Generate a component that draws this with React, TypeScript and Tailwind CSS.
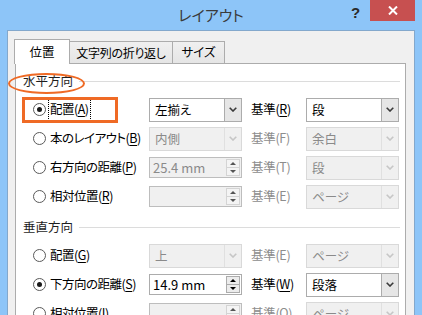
import React from "react";

function Chevron({ color }: { color: string }) {
  return (
    <svg width="8" height="5" viewBox="0 0 8 5">
      <path d="M0.7 0.7 L4 4 L7.3 0.7" fill="none" stroke={color} strokeWidth="1.6" />
    </svg>
  );
}

function Tri({ up, color }: { up?: boolean; color: string }) {
  return (
    <svg width="6" height="3" viewBox="0 0 6 3">
      <path d={up ? "M0 3 L3 0 L6 3 Z" : "M0 0 L3 3 L6 0 Z"} fill={color} />
    </svg>
  );
}

function Combo({ text, enabled }: { text: string; enabled: boolean }) {
  return (
    <div
      className={`flex h-[24px] w-[93px] shrink-0 border ${
        enabled ? "border-[#acacac] bg-white" : "border-[#d9d9d9] bg-[#f0f0f0]"
      }`}
    >
      <div
        className={`flex-1 pl-[5px] text-[12.5px] leading-[22px] ${
          enabled ? "text-black" : "text-[#8a8a8a]"
        }`}
      >
        {text}
      </div>
      <div
        className={`flex w-[17px] items-center justify-center border-l ${
          enabled ? "border-[#acacac] bg-[#e6e6e6]" : "border-[#e0e0e0] bg-[#f0f0f0]"
        }`}
      >
        <Chevron color={enabled ? "#3a3a3a" : "#c6c6c6"} />
      </div>
    </div>
  );
}

function Spin({ text, enabled }: { text: string; enabled: boolean }) {
  return (
    <div
      className={`flex h-[21px] w-[93px] shrink-0 border ${
        enabled ? "border-[#acacac] bg-white" : "border-[#bdbdbd] bg-[#f0f0f0]"
      }`}
    >
      <div
        className={`flex-1 pl-[3px] text-[13px] leading-[19px] ${
          enabled ? "text-black" : "text-[#8a8a8a]"
        }`}
      >
        {text}
      </div>
      <div className="flex w-[16px] flex-col p-[1px]">
        <div
          className={`flex flex-1 items-center justify-center border ${
            enabled ? "border-[#acacac] bg-[#ececec]" : "border-[#d4d4d4] bg-[#f4f4f4]"
          }`}
        >
          <Tri up color={enabled ? "#000" : "#555"} />
        </div>
        <div
          className={`flex flex-1 items-center justify-center border border-t-0 ${
            enabled ? "border-[#acacac] bg-[#ececec]" : "border-[#d4d4d4] bg-[#f4f4f4]"
          }`}
        >
          <Tri color={enabled ? "#000" : "#555"} />
        </div>
      </div>
    </div>
  );
}

function Radio({ checked }: { checked?: boolean }) {
  return (
    <div className="flex h-[13px] w-[13px] shrink-0 items-center justify-center rounded-full border border-[#5a5a5a] bg-white">
      {checked && <div className="h-[5px] w-[5px] rounded-full bg-[#1a1a1a]" />}
    </div>
  );
}

function Label({ pre, key1, focus }: { pre: string; key1: string; focus?: boolean }) {
  return (
    <span
      className={`whitespace-nowrap text-[12.5px] tracking-[-0.5px] text-black ${
        focus ? "outline outline-1 outline-dotted outline-black outline-offset-[1px]" : ""
      }`}
    >
      {pre}(<span className="underline underline-offset-2">{key1}</span>)
    </span>
  );
}

function Kijun({ k, enabled }: { k: string; enabled: boolean }) {
  return (
    <div
      className={`ml-[9px] w-[55px] shrink-0 whitespace-nowrap text-[12.5px] tracking-[-0.3px] ${
        enabled ? "text-black" : "text-[#8d8d8d]"
      }`}
    >
      基準(
      {enabled ? <span className="underline underline-offset-2">{k}</span> : k})
    </div>
  );
}

function Row({
  label,
  k,
  checked,
  focus,
  left,
  kijun,
  kEnabled,
  right,
}: {
  label: string;
  k: string;
  checked?: boolean;
  focus?: boolean;
  left: React.ReactNode;
  kijun: string;
  kEnabled: boolean;
  right: React.ReactNode;
}) {
  return (
    <div className="flex h-[29px] items-center">
      <div className="flex w-[133px] shrink-0 items-center gap-[4px] pl-[17px]">
        <Radio checked={checked} />
        <Label pre={label} key1={k} focus={focus} />
      </div>
      {left}
      <Kijun k={kijun} enabled={kEnabled} />
      {right}
    </div>
  );
}

function Header({ text }: { text: string }) {
  return (
    <div className="flex h-[20px] items-center pl-[7px] pr-[5px]">
      <span className="text-[12.5px] text-[#1e1e1e]">{text}</span>
      <div className="ml-[6px] h-px flex-1 bg-[#dcdcdc]" />
    </div>
  );
}

export default function App() {
  return (
    <div className="relative flex h-[315px] w-[422px] flex-col overflow-hidden bg-[#8dc5f8] font-['Noto_Sans_CJK_JP','Noto_Sans',sans-serif] [font-feature-settings:'palt']">
      {/* title bar */}
      <div className="relative flex h-[30px] shrink-0 items-center justify-center">
        <span className="text-[15px] text-[#3a3a3a]">レイアウト</span>
        <span className="absolute left-[351px] top-[2px] text-[15px] font-bold text-[#2a2a2a] font-['Liberation_Sans',sans-serif]">
          ?
        </span>
        <div className="absolute left-[370px] top-0 flex h-[21px] w-[45px] items-center justify-center bg-[#c75050]">
          <svg width="10" height="9" viewBox="0 0 10 9">
            <path d="M1 0.5 L9 8.5 M9 0.5 L1 8.5" stroke="#fff" strokeWidth="2" />
          </svg>
        </div>
      </div>

      {/* body */}
      <div className="flex flex-1 px-[7px]">
        <div className="flex flex-1 flex-col border border-b-0 border-[#83a8cc] bg-[#f0f0f0] pt-[8px]">
          {/* tabs */}
          <div className="flex items-end pl-[6px]">
            <div className="relative z-10 -mb-px flex h-[25px] w-[56px] items-center justify-center border border-b-0 border-[#acacac] bg-white text-[12.5px] text-black">
              位置
            </div>
            <div className="-ml-px flex h-[22px] w-[104px] items-center justify-center border border-b-0 border-[#acacac] bg-gradient-to-b from-[#f0f0f0] to-[#e5e5e5] text-[12px] tracking-[-0.3px] text-black">
              文字列の折り返し
            </div>
            <div className="-ml-px flex h-[22px] w-[53px] items-center justify-center border border-b-0 border-[#acacac] bg-gradient-to-b from-[#f0f0f0] to-[#e5e5e5] text-[12.5px] text-black">
              サイズ
            </div>
          </div>

          {/* panel */}
          <div className="ml-[7px] flex w-[391px] flex-1 flex-col border border-b-0 border-[#acacac] bg-white pt-[7px]">
            <Header text="水平方向" />
            <div className="mt-[4px]">
              <Row
                label="配置"
                k="A"
                checked
                focus
                left={<Combo text="左揃え" enabled />}
                kijun="R"
                kEnabled
                right={<Combo text="段" enabled />}
              />
              <Row
                label="本のレイアウト"
                k="B"
                left={<Combo text="内側" enabled={false} />}
                kijun="F"
                kEnabled={false}
                right={<Combo text="余白" enabled={false} />}
              />
              <Row
                label="右方向の距離"
                k="P"
                left={<Spin text="25.4 mm" enabled={false} />}
                kijun="T"
                kEnabled={false}
                right={<Combo text="段" enabled={false} />}
              />
              <Row
                label="相対位置"
                k="R"
                left={<Spin text="" enabled={false} />}
                kijun="E"
                kEnabled={false}
                right={<Combo text="ページ" enabled={false} />}
              />
            </div>
            <div className="mt-[6px]">
              <Header text="垂直方向" />
            </div>
            <div className="mt-[4px]">
              <Row
                label="配置"
                k="G"
                left={<Combo text="上" enabled={false} />}
                kijun="E"
                kEnabled={false}
                right={<Combo text="ページ" enabled={false} />}
              />
              <Row
                label="下方向の距離"
                k="S"
                checked
                left={<Spin text="14.9 mm" enabled />}
                kijun="W"
                kEnabled
                right={<Combo text="段落" enabled />}
              />
              <Row
                label="相対位置"
                k="I"
                left={<Spin text="" enabled={false} />}
                kijun="O"
                kEnabled={false}
                right={<Combo text="ページ" enabled={false} />}
              />
            </div>
          </div>
        </div>
      </div>

      {/* annotations */}
      <div className="pointer-events-none absolute left-[8px] top-[73px] h-[21px] w-[77px] rounded-[50%] border-[2.5px] border-[#ef6a25]" />
      <div className="pointer-events-none absolute left-[22px] top-[97px] h-[26px] w-[96px] border-[3px] border-[#ef6a25]" />
    </div>
  );
}
